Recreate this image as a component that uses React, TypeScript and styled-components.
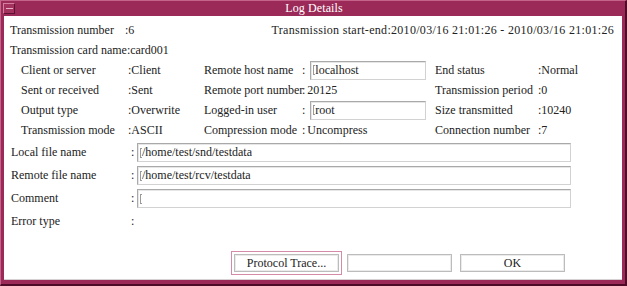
import React from "react";
import styled, { createGlobalStyle } from "styled-components";

const GlobalStyle = createGlobalStyle`
  html, body {
    margin: 0;
    padding: 0;
    background: #ffffff;
  }

  body {
    font-family: "Liberation Serif", "DejaVu Serif", serif;
    font-size: 12px;
    color: #222222;
  }
`;

const Window = styled.div`
  box-sizing: border-box;
  width: 627px;
  height: 286px;
  display: flex;
  flex-direction: column;
  background: #9b2a58;
  border-top: 1px solid #c4648a;
  border-left: 1px solid #c4648a;
  border-right: 2px solid #4e0c28;
  border-bottom: 2px solid #4e0c28;
`;

const TitleBar = styled.div`
  height: 15px;
  display: grid;
  grid-template-columns: 1fr auto 1fr;
  align-items: center;
  padding-left: 2px;
  color: #ffffff;
  font-size: 12px;
`;

const MenuButton = styled.div`
  box-sizing: border-box;
  width: 12px;
  height: 11px;
  display: flex;
  align-items: center;
  justify-content: center;
  background: #a3325f;
  border: 1px solid;
  border-color: #d67ea0 #5e1231 #5e1231 #d67ea0;

  &::after {
    content: "";
    width: 7px;
    height: 1px;
    background: #e8b0c4;
  }
`;

const Title = styled.div`
  letter-spacing: 0.1px;
`;

const Body = styled.div`
  flex: 1;
  margin: 0 3px 4px 3px;
  display: flex;
  flex-direction: column;
  background: #ffffff;
  border-bottom: 1px solid #d6d0d3;
  padding: 4px 8px 7px 6px;
  white-space: pre;
`;

const Line = styled.div<{ $height?: number }>`
  display: flex;
  align-items: center;
  height: ${(p) => p.$height ?? 20}px;
`;

const TopLine = styled(Line)`
  justify-content: space-between;
`;

const Period = styled.span`
  letter-spacing: 0.3px;
`;

const Label = styled.span<{ $width: number; $indent?: number }>`
  width: ${(p) => p.$width}px;
  padding-left: ${(p) => p.$indent ?? 0}px;
  flex-shrink: 0;
`;

const InfoGrid = styled.div`
  display: grid;
  grid-template-columns: 107px 76px 98px 133px 103px 1fr;
  grid-auto-rows: 20px;
  align-items: center;
  margin-left: 11px;
`;

const Cell = styled.span`
  display: flex;
  align-items: center;
`;

const Colon = styled.span<{ $gap?: number }>`
  margin-right: ${(p) => p.$gap ?? 0}px;
`;

const Field = styled.div<{ $width: number }>`
  box-sizing: border-box;
  width: ${(p) => p.$width}px;
  height: 19px;
  display: flex;
  align-items: center;
  padding-left: 2px;
  background: #ffffff;
  border: 1px solid;
  border-color: #a9a9a9 #d2d2d2 #d2d2d2 #a9a9a9;
  box-shadow: inset 1px 1px 0 #e6e6e6;
`;

const Caret = styled.span`
  box-sizing: border-box;
  width: 2px;
  height: 10px;
  border: 1px solid #9a9a9a;
  border-right: none;
`;

const FileColon = styled.span`
  width: 6px;
  flex-shrink: 0;
`;

const ButtonRow = styled.div`
  margin-top: auto;
  margin-left: 224px;
  display: flex;
  gap: 8px;
`;

const Button = styled.button<{ $focused?: boolean }>`
  box-sizing: border-box;
  width: 105px;
  height: 18px;
  padding: 0;
  background: #ffffff;
  border: 1px solid #bcbcbc;
  box-shadow: inset 0 0 0 1px #ebebeb;
  font-family: "Liberation Serif", "DejaVu Serif", serif;
  font-size: 12px;
  color: #222222;
  outline: ${(p) => (p.$focused ? "1px solid #d48aa8" : "none")};
  outline-offset: 2px;
`;

interface InfoRow {
  label1: string;
  value1: string;
  label2: string;
  value2: string;
  field?: boolean;
  label3: string;
  value3: string;
}

const infoRows: InfoRow[] = [
  { label1: "Client or server", value1: "Client", label2: "Remote host name", value2: "localhost", field: true, label3: "End status", value3: "Normal" },
  { label1: "Sent or received", value1: "Sent", label2: "Remote port number", value2: "20125", label3: "Transmission period", value3: "0" },
  { label1: "Output type", value1: "Overwrite", label2: "Logged-in user", value2: "root", field: true, label3: "Size transmitted", value3: "10240" },
  { label1: "Transmission mode", value1: "ASCII", label2: "Compression mode", value2: "Uncompress", label3: "Connection number", value3: "7" },
];

const fileRows = [
  { label: "Local file name", value: "/home/test/snd/testdata" },
  { label: "Remote file name", value: "/home/test/rcv/testdata" },
  { label: "Comment", value: "" },
];

const App = () => (
  <>
    <GlobalStyle />
    <Window>
      <TitleBar>
        <MenuButton />
        <Title>Log Details</Title>
        <span />
      </TitleBar>
      <Body>
        <TopLine>
          <Cell>
            <Label $width={115}>Transmission number</Label>
            <span>:6</span>
          </Cell>
          <Period>Transmission start-end:2010/03/16 21:01:26 - 2010/03/16 21:01:26</Period>
        </TopLine>
        <Line>Transmission card name:card001</Line>
        <InfoGrid>
          {infoRows.map((row) => (
            <React.Fragment key={row.label1}>
              <Cell>{row.label1}</Cell>
              <Cell>:{row.value1}</Cell>
              <Cell>{row.label2}</Cell>
              {row.field ? (
                <Cell>
                  <Colon $gap={5}>:</Colon>
                  <Field $width={116}>
                    <Caret />
                    {row.value2}
                  </Field>
                </Cell>
              ) : (
                <Cell>
                  <Colon $gap={2}>:</Colon>
                  {row.value2}
                </Cell>
              )}
              <Cell>{row.label3}</Cell>
              <Cell>:{row.value3}</Cell>
            </React.Fragment>
          ))}
        </InfoGrid>
        <Line $height={1} />
        {fileRows.map((row) => (
          <Line key={row.label} $height={23}>
            <Label $width={120} $indent={1}>
              {row.label}
            </Label>
            <FileColon>:</FileColon>
            <Field $width={434}>
              <Caret />
              {row.value}
            </Field>
          </Line>
        ))}
        <Line $height={23}>
          <Label $width={120} $indent={1}>
            Error type
          </Label>
          <FileColon>:</FileColon>
        </Line>
        <ButtonRow>
          <Button $focused>Protocol Trace...</Button>
          <Button />
          <Button>OK</Button>
        </ButtonRow>
      </Body>
    </Window>
  </>
);

export default App;
